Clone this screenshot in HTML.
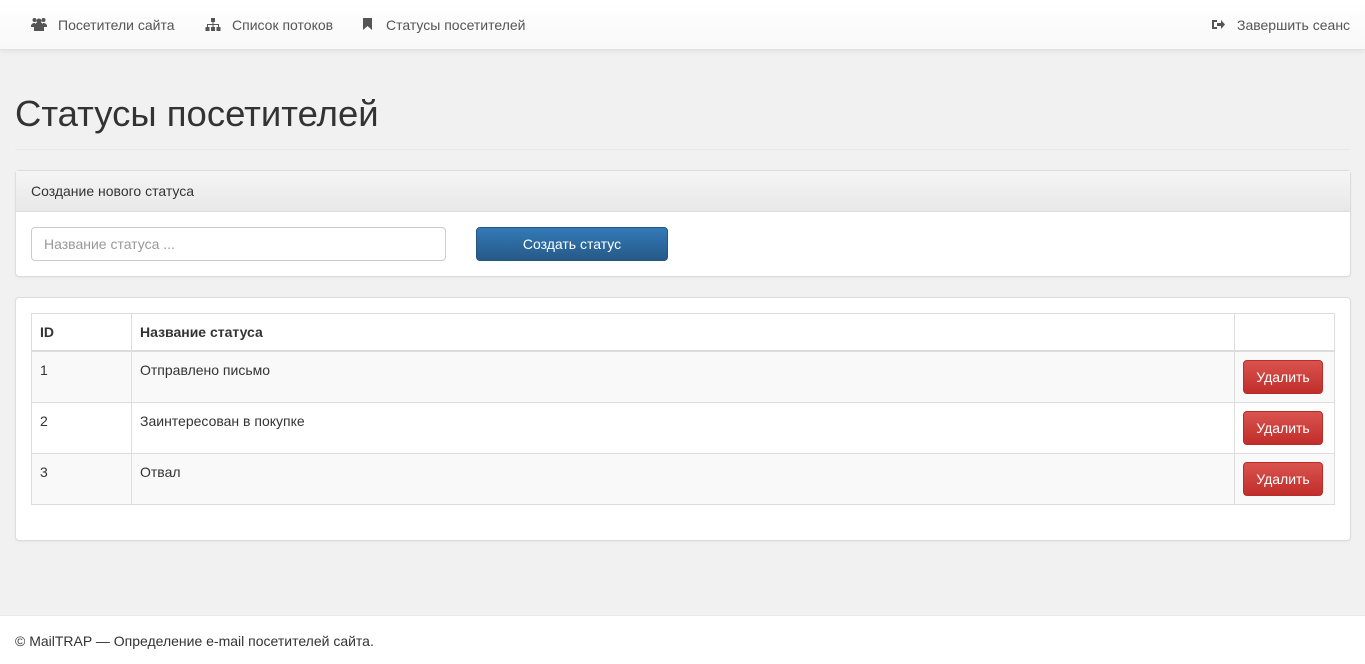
<!DOCTYPE html>
<html><head><meta charset="utf-8"><style>
*{box-sizing:border-box}
body{margin:0;width:1365px;height:664px;background:#f1f1f1;font-family:"Liberation Sans",Arial,sans-serif;font-size:14px;color:#333;position:relative;overflow:hidden}
.nav{position:absolute;left:0;top:0;width:1365px;height:50px;background:linear-gradient(#fff,#f8f8f8);border-bottom:1px solid #e2e2e2;box-shadow:0 1px 5px rgba(0,0,0,.08)}
.nav a{position:absolute;top:17px;color:#555;font-size:14px;text-decoration:none}
.nav svg{position:absolute;top:-1px}
h1{position:absolute;left:15px;top:93px;margin:0;font-size:36.5px;font-weight:400;color:#333}
.hr{position:absolute;left:15px;top:149px;width:1335px;border-top:1px solid #e8e8e8}
.panel{position:absolute;left:15px;width:1336px;background:#fff;border:1px solid #ddd;border-radius:4px;box-shadow:0 1px 2px rgba(0,0,0,.05)}
.ph{height:41px;background:linear-gradient(#f5f5f5,#e8e8e8);border-bottom:1px solid #ddd;padding:12px 15px;font-size:14px}
input{position:absolute;left:15px;top:56px;width:415px;height:34px;border:1px solid #ccc;border-radius:4px;padding:6px 12px;font:14px "Liberation Sans",sans-serif;color:#999}
.bp{position:absolute;left:460px;top:56px;width:192px;height:34px;border-radius:4px;background:linear-gradient(#337ab7,#265a88);border:1px solid #245580;color:#fff;font-size:14px;text-align:center;line-height:32px}
table{position:absolute;left:15px;top:15px;width:1304px;border-collapse:collapse;font-size:14px}
td,th{border:1px solid #ddd;padding:10px 8px 8px;vertical-align:top;text-align:left}
th{height:37px;border-bottom:2px solid #ddd}
td{height:51px}
tr:nth-child(even) td{background:#f9f9f9}
td.b{padding:8px}
.bd{display:inline-block;width:80px;height:34px;border-radius:4px;background:linear-gradient(#d9534f,#c12e2a);border:1px solid #b92c28;color:#fff;text-align:center;line-height:32px;font-size:14px}
.foot{position:absolute;left:0;top:615px;width:1365px;height:49px;background:#fff;border-top:1px solid #e8e8e8;padding:17px 15px;font-size:14px}
</style></head><body>
<div class="nav">
<a style="left:58px"><svg style="left:-27px" width="16" height="16" viewBox="0 0 16 16" fill="#555"><circle cx="8" cy="5" r="2.5"/><circle cx="3.5" cy="4" r="2"/><circle cx="12.5" cy="4" r="2"/><path d="M3 15v-4a5 5 0 0 1 10 0v4z"/><path d="M0 11v-1.5a3.5 3.5 0 0 1 4-2.5v4z"/><path d="M16 11v-1.5a3.5 3.5 0 0 0-4-2.5v4z"/></svg>Посетители сайта</a>
<a style="left:232px"><svg style="left:-27px" width="16" height="16" viewBox="0 0 16 16" fill="#555"><rect x="6" y="2" width="4" height="4"/><rect x="7.5" y="6" width="1" height="3"/><rect x="2.5" y="8" width="11" height="1"/><rect x="2" y="8" width="1" height="3"/><rect x="13" y="8" width="1" height="3"/><rect x="7.5" y="8" width="1" height="3"/><rect x="0.5" y="11" width="4" height="4"/><rect x="6" y="11" width="4" height="4"/><rect x="11.5" y="11" width="4" height="4"/></svg>Список потоков</a>
<a style="left:386px"><svg style="left:-24px" width="12" height="16" viewBox="0 0 12 16" fill="#555"><path d="M1 2h9v12l-4.5-4L1 14z"/></svg>Статусы посетителей</a>
<a style="left:1237px"><svg style="left:-26px" width="14" height="16" viewBox="0 0 14 16" fill="#555"><path d="M1 4h5v2H3v5h3v2H1z"/><path d="M6 7h4V4l4 4.5-4 4.5v-3H6z"/></svg>Завершить сеанс</a>
</div>
<h1>Статусы посетителей</h1>
<div class="hr"></div>
<div class="panel" style="top:170px;height:107px"><div class="ph">Создание нового статуса</div>
<input value="Название статуса ..."><div class="bp">Создать статус</div></div>
<div class="panel" style="top:297px;height:244px">
<table>
<tr><th style="width:100px">ID</th><th>Название статуса</th><th style="width:100px"></th></tr>
<tr><td>1</td><td>Отправлено письмо</td><td class="b"><span class="bd">Удалить</span></td></tr>
<tr><td>2</td><td>Заинтересован в покупке</td><td class="b"><span class="bd">Удалить</span></td></tr>
<tr><td>3</td><td>Отвал</td><td class="b"><span class="bd">Удалить</span></td></tr>
</table></div>
<div class="foot">© MailTRAP — Определение e-mail посетителей сайта.</div>
</body></html>
